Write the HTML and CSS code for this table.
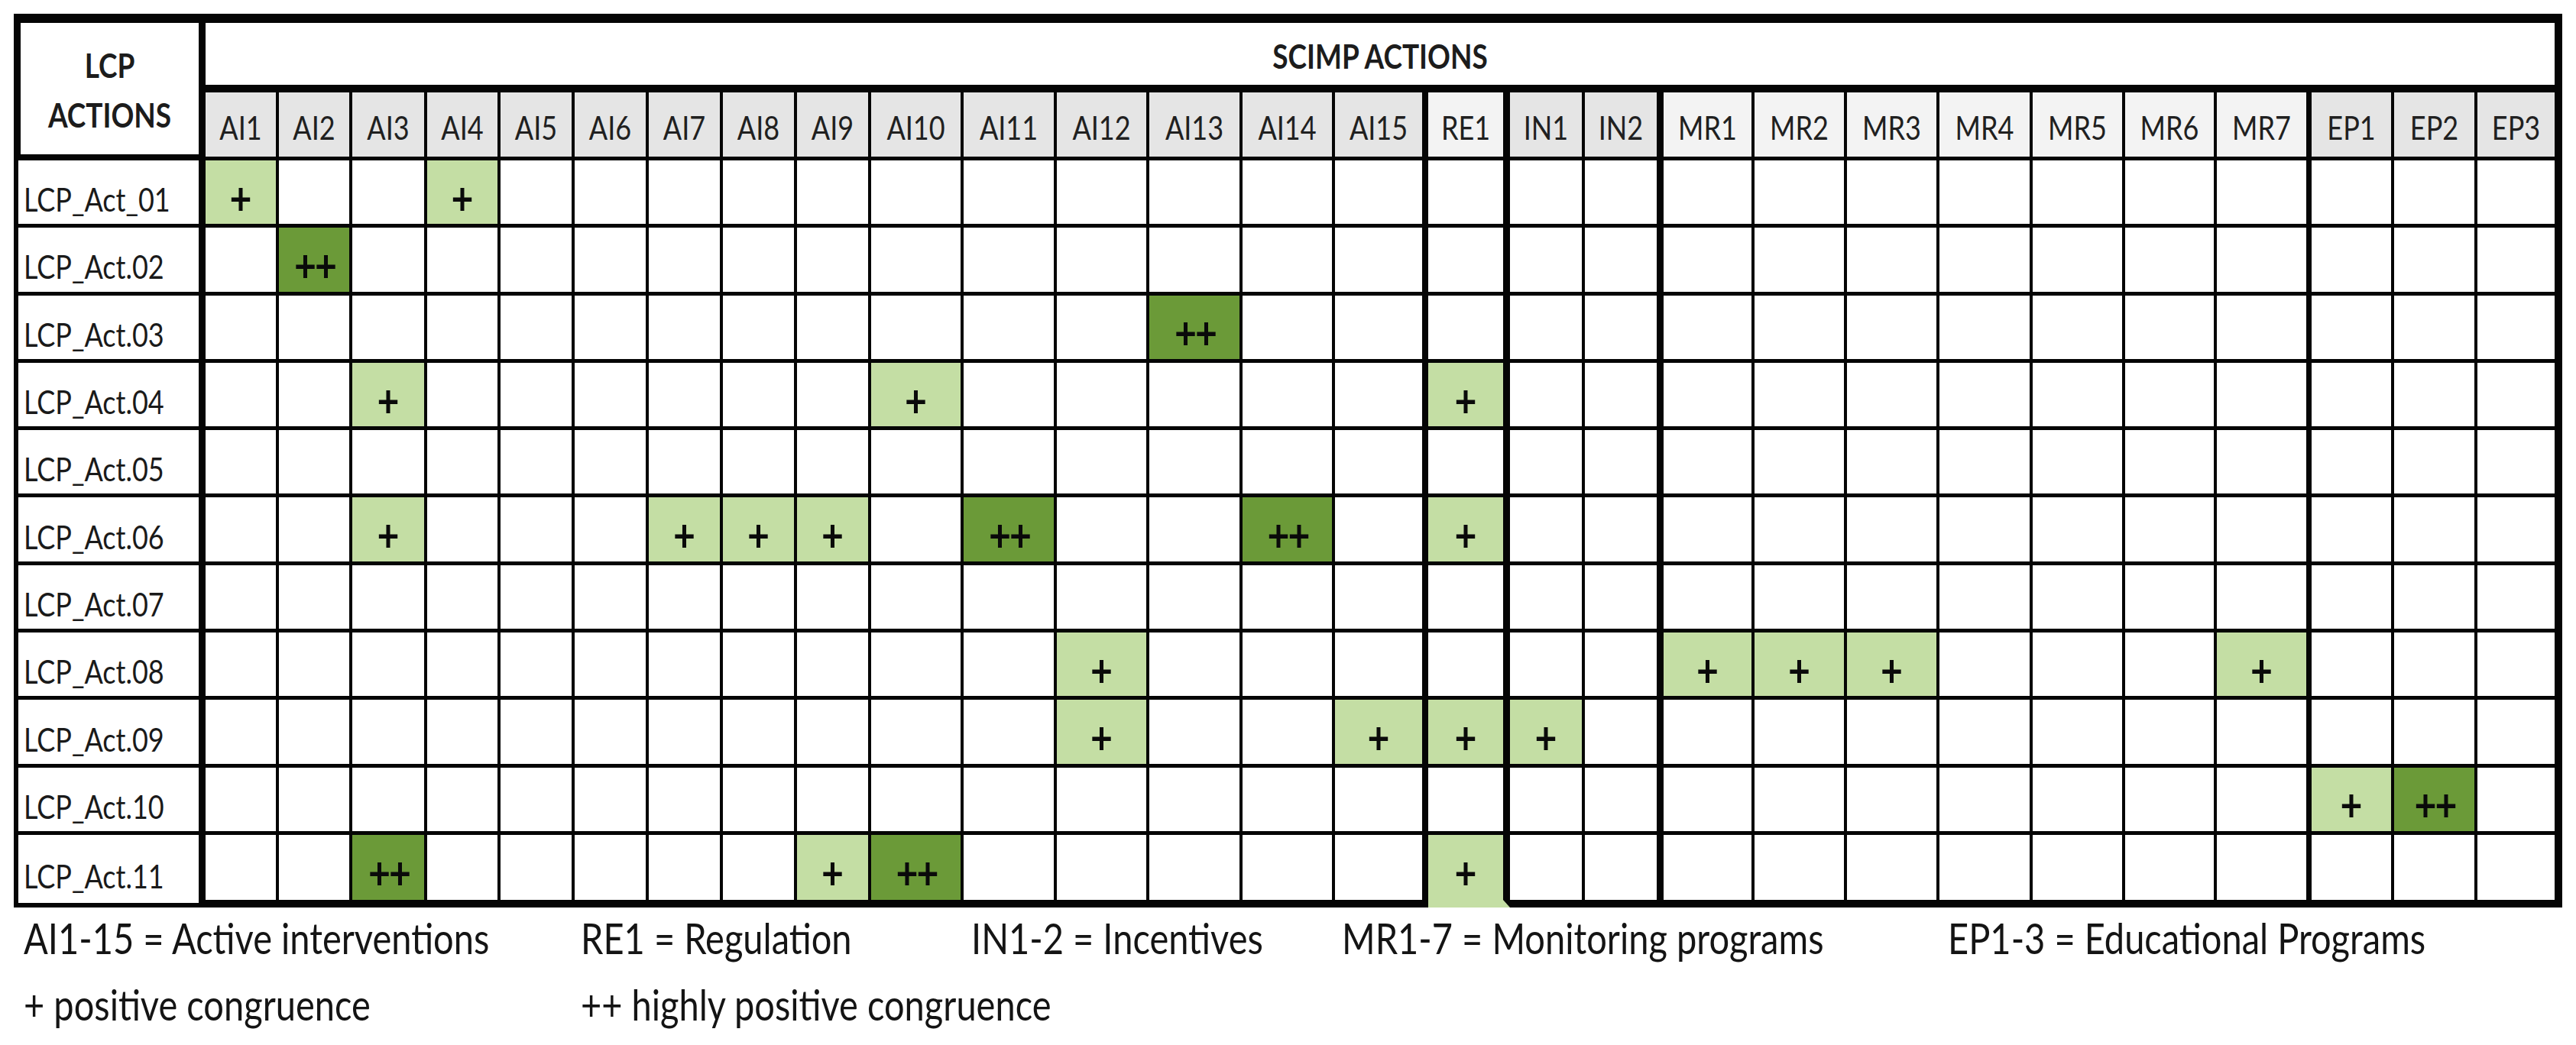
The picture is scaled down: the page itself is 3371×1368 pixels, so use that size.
FILE: index.html
```html
<!DOCTYPE html>
<html lang="en">
<head>
<meta charset="utf-8">
<title>LCP actions vs SCIMP actions</title>
<link rel="stylesheet" href="styles.css">
</head>
<body>
<div class="table">
  <div class="head">
    <div class="lcp-head"><span>LCP<br>ACTIONS</span></div>
    <div class="title"><span>SCIMP ACTIONS</span></div>
    <div class="h"><span>AI1</span></div><div class="h"><span>AI2</span></div><div class="h"><span>AI3</span></div><div class="h"><span>AI4</span></div><div class="h"><span>AI5</span></div>
    <div class="h"><span>AI6</span></div><div class="h"><span>AI7</span></div><div class="h"><span>AI8</span></div><div class="h"><span>AI9</span></div><div class="h"><span>AI10</span></div>
    <div class="h"><span>AI11</span></div><div class="h"><span>AI12</span></div><div class="h"><span>AI13</span></div><div class="h"><span>AI14</span></div><div class="h"><span>AI15</span></div>
    <div class="h"><span>RE1</span></div>
    <div class="h"><span>IN1</span></div><div class="h"><span>IN2</span></div>
    <div class="h"><span>MR1</span></div><div class="h"><span>MR2</span></div><div class="h"><span>MR3</span></div><div class="h"><span>MR4</span></div><div class="h"><span>MR5</span></div><div class="h"><span>MR6</span></div><div class="h"><span>MR7</span></div>
    <div class="h"><span>EP1</span></div><div class="h"><span>EP2</span></div><div class="h"><span>EP3</span></div>
  </div>

  <div class="row">
    <div class="lab"><span>LCP_Act_01</span></div>
    <div class="p"><span>+</span></div><div></div><div></div><div class="p"><span>+</span></div><div></div>
    <div></div><div></div><div></div><div></div><div></div>
    <div></div><div></div><div></div><div></div><div></div>
    <div></div>
    <div></div><div></div>
    <div></div><div></div><div></div><div></div><div></div><div></div><div></div>
    <div></div><div></div><div></div>
  </div>

  <div class="row">
    <div class="lab"><span>LCP_Act.02</span></div>
    <div></div><div class="pp"><span>++</span></div><div></div><div></div><div></div>
    <div></div><div></div><div></div><div></div><div></div>
    <div></div><div></div><div></div><div></div><div></div>
    <div></div>
    <div></div><div></div>
    <div></div><div></div><div></div><div></div><div></div><div></div><div></div>
    <div></div><div></div><div></div>
  </div>

  <div class="row">
    <div class="lab"><span>LCP_Act.03</span></div>
    <div></div><div></div><div></div><div></div><div></div>
    <div></div><div></div><div></div><div></div><div></div>
    <div></div><div></div><div class="pp"><span>++</span></div><div></div><div></div>
    <div></div>
    <div></div><div></div>
    <div></div><div></div><div></div><div></div><div></div><div></div><div></div>
    <div></div><div></div><div></div>
  </div>

  <div class="row">
    <div class="lab"><span>LCP_Act.04</span></div>
    <div></div><div></div><div class="p"><span>+</span></div><div></div><div></div>
    <div></div><div></div><div></div><div></div><div class="p"><span>+</span></div>
    <div></div><div></div><div></div><div></div><div></div>
    <div class="p"><span>+</span></div>
    <div></div><div></div>
    <div></div><div></div><div></div><div></div><div></div><div></div><div></div>
    <div></div><div></div><div></div>
  </div>

  <div class="row">
    <div class="lab"><span>LCP_Act.05</span></div>
    <div></div><div></div><div></div><div></div><div></div>
    <div></div><div></div><div></div><div></div><div></div>
    <div></div><div></div><div></div><div></div><div></div>
    <div></div>
    <div></div><div></div>
    <div></div><div></div><div></div><div></div><div></div><div></div><div></div>
    <div></div><div></div><div></div>
  </div>

  <div class="row">
    <div class="lab"><span>LCP_Act.06</span></div>
    <div></div><div></div><div class="p"><span>+</span></div><div></div><div></div>
    <div></div><div class="p"><span>+</span></div><div class="p"><span>+</span></div><div class="p"><span>+</span></div><div></div>
    <div class="pp"><span>++</span></div><div></div><div></div><div class="pp"><span>++</span></div><div></div>
    <div class="p"><span>+</span></div>
    <div></div><div></div>
    <div></div><div></div><div></div><div></div><div></div><div></div><div></div>
    <div></div><div></div><div></div>
  </div>

  <div class="row">
    <div class="lab"><span>LCP_Act.07</span></div>
    <div></div><div></div><div></div><div></div><div></div>
    <div></div><div></div><div></div><div></div><div></div>
    <div></div><div></div><div></div><div></div><div></div>
    <div></div>
    <div></div><div></div>
    <div></div><div></div><div></div><div></div><div></div><div></div><div></div>
    <div></div><div></div><div></div>
  </div>

  <div class="row">
    <div class="lab"><span>LCP_Act.08</span></div>
    <div></div><div></div><div></div><div></div><div></div>
    <div></div><div></div><div></div><div></div><div></div>
    <div></div><div class="p"><span>+</span></div><div></div><div></div><div></div>
    <div></div>
    <div></div><div></div>
    <div class="p"><span>+</span></div><div class="p"><span>+</span></div><div class="p"><span>+</span></div><div></div><div></div><div></div><div class="p"><span>+</span></div>
    <div></div><div></div><div></div>
  </div>

  <div class="row">
    <div class="lab"><span>LCP_Act.09</span></div>
    <div></div><div></div><div></div><div></div><div></div>
    <div></div><div></div><div></div><div></div><div></div>
    <div></div><div class="p"><span>+</span></div><div></div><div></div><div class="p"><span>+</span></div>
    <div class="p"><span>+</span></div>
    <div class="p"><span>+</span></div><div></div>
    <div></div><div></div><div></div><div></div><div></div><div></div><div></div>
    <div></div><div></div><div></div>
  </div>

  <div class="row">
    <div class="lab"><span>LCP_Act.10</span></div>
    <div></div><div></div><div></div><div></div><div></div>
    <div></div><div></div><div></div><div></div><div></div>
    <div></div><div></div><div></div><div></div><div></div>
    <div></div>
    <div></div><div></div>
    <div></div><div></div><div></div><div></div><div></div><div></div><div></div>
    <div class="p"><span>+</span></div><div class="pp"><span>++</span></div><div></div>
  </div>

  <div class="row last">
    <div class="lab"><span>LCP_Act.11</span></div>
    <div></div><div></div><div class="pp"><span>++</span></div><div></div><div></div>
    <div></div><div></div><div></div><div class="p"><span>+</span></div><div class="pp"><span>++</span></div>
    <div></div><div></div><div></div><div></div><div></div>
    <div class="p"><span>+</span></div>
    <div></div><div></div>
    <div></div><div></div><div></div><div></div><div></div><div></div><div></div>
    <div></div><div></div><div></div>
  </div>
</div>

<div class="legend">
  <div><span>AI1-15 = Active interventions</span></div>
  <div><span>RE1 = Regulation</span></div>
  <div><span>IN1-2 = Incentives</span></div>
  <div><span>MR1-7 = Monitoring programs</span></div>
  <div><span>EP1-3 = Educational Programs</span></div>
  <div><span>+ positive congruence</span></div>
  <div><span>++ highly positive congruence</span></div>
</div>
</body>
</html>
```

FILE: styles.css
```css
* {
  box-sizing: border-box;
}

html, body {
  margin: 0;
  padding: 0;
  background: #ffffff;
}

body {
  font-family: Lato, "Liberation Sans", sans-serif;
  color: #1c1c1c;
}

.table {
  --cols: 251px 96px 96px 98px 96px 97px 97px 97px 97px 97px 121px 122px 121px 122px 121px 122px 107px 98px 103px 119px 121px 121px 122px 121px 120px 124px 108px 109px 111px;
  width: 3335px;
  margin: 18px 0 0 18px;
}

.head,
.row {
  display: grid;
  grid-template-columns: var(--cols);
}

.head {
  grid-template-rows: 103px 89px;
}

.head span,
.row span,
.legend span {
  display: inline-block;
  transform: scaleY(1.18);
  white-space: nowrap;
}

.lcp-head {
  grid-row: 1 / 3;
  border: solid #050505;
  border-width: 12px 9px 8px 9px;
  display: flex;
  align-items: center;
  justify-content: center;
  text-align: center;
  font-weight: 700;
  font-size: 37px;
  line-height: 55px;
  padding-top: 2px;
}

.title {
  grid-column: 2 / -1;
  border: solid #050505;
  border-width: 12px 10px 10px 0;
  display: flex;
  align-items: center;
  justify-content: center;
  font-weight: 700;
  font-size: 37px;
  line-height: 1;
  padding-top: 4px;
}

.h {
  border: solid #050505;
  border-width: 0 4px 5px 0;
  background: #e5e5e5;
  display: flex;
  align-items: center;
  justify-content: center;
  font-size: 36px;
  line-height: 1;
  padding-top: 5px;
  color: #202020;
}

.h:nth-child(17) { border-right-width: 8px; }
.h:nth-child(18) { border-right-width: 9px; background: #f3f3f3; }
.h:nth-child(20) { border-right-width: 9px; }
.h:nth-child(n+21):nth-child(-n+27) { background: #f3f3f3; }
.h:nth-child(27) { border-right-width: 7px; }
.h:nth-child(30) { border-right-width: 10px; }

.row {
  grid-template-rows: 88.3px;
}

.row > div {
  border: solid #050505;
  border-width: 0 4px 5px 0;
  display: flex;
  align-items: center;
  justify-content: center;
  padding-top: 17px;
  font-size: 36px;
  line-height: 1;
}

.row > :nth-child(16) { border-right-width: 8px; }
.row > :nth-child(17) { border-right-width: 9px; }
.row > :nth-child(19) { border-right-width: 9px; }
.row > :nth-child(26) { border-right-width: 7px; }
.row > :nth-child(29) { border-right-width: 10px; }

.row > .lab {
  border-left-width: 6px;
  border-right-width: 9px;
  justify-content: flex-start;
  padding-left: 7px;
  color: #1a1a1a;
}

.row > .p,
.row > .pp {
  font-weight: 700;
  font-size: 50px;
  color: #0a0a0a;
  padding-top: 14px;
}

.row > .pp span {
  letter-spacing: -2px;
  margin-right: -2px;
}

.row > .p {
  background: #c4dea4;
}

.row > .pp {
  background: #6b9a38;
}

.row.last {
  grid-template-rows: 95px;
}

.row.last > div {
  border-bottom-width: 10px;
}

.row.last > .lab {
  border-bottom-width: 6px;
}

.row.last > :nth-child(17) {
  border-bottom-color: #c4dea4;
}

.legend {
  display: grid;
  grid-template-columns: 729px 511px 485px 793px auto;
  grid-auto-rows: 87px;
  padding-left: 31px;
  margin-top: -3px;
  font-size: 47px;
  line-height: 87px;
  color: #141414;
}
```
